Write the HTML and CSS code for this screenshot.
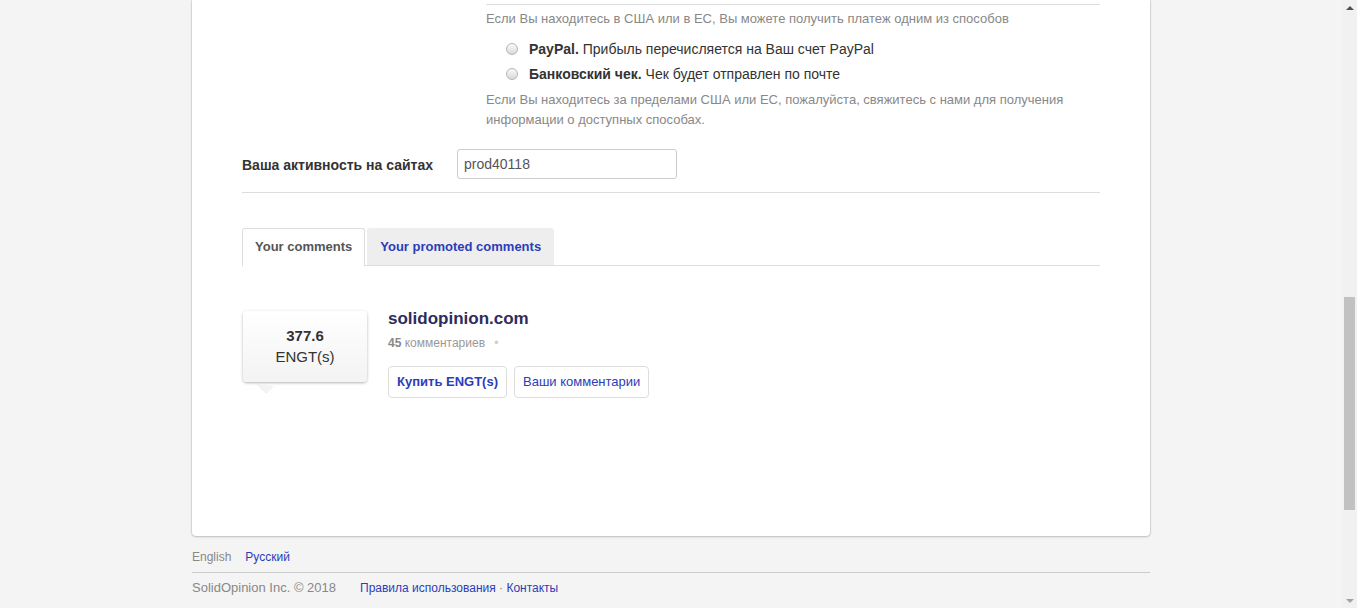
FILE: index.html
```html
<!DOCTYPE html>
<html lang="ru">
<head>
<meta charset="utf-8">
<title>SolidOpinion</title>
<link rel="stylesheet" href="styles.css">
</head>
<body>
<div class="screen">
  <div class="viewport">
    <div class="page">
      <div class="card">
        <div class="payout">
          <p class="note">Если Вы находитесь в США или в ЕС, Вы можете получить платеж одним из способов</p>
          <ul class="radios">
            <li><span class="radio"></span><b>PayPal.</b>&nbsp;Прибыль перечисляется на Ваш счет PayPal</li>
            <li><span class="radio"></span><b>Банковский чек.</b>&nbsp;Чек будет отправлен по почте</li>
          </ul>
          <p class="note">Если Вы находитесь за пределами США или ЕС, пожалуйста, свяжитесь с нами для получения информации о доступных способах.</p>
        </div>
        <div class="form-row">
          <label class="label">Ваша активность на сайтах</label>
          <div class="input">prod40118</div>
        </div>
        <div class="divider"></div>
        <ul class="tabs">
          <li class="tab active">Your comments</li>
          <li class="tab">Your promoted comments</li>
        </ul>
        <div class="comments">
          <div class="item">
            <div class="bubble">
              <div class="amount">377.6</div>
              <div class="unit">ENGT(s)</div>
            </div>
            <div class="info">
              <div class="site">solidopinion.com</div>
              <div class="meta"><b>45</b> комментариев <span class="dot">•</span></div>
              <div class="actions">
                <span class="btn strong">Купить ENGT(s)</span>
                <span class="btn">Ваши комментарии</span>
              </div>
            </div>
          </div>
        </div>
      </div>
      <div class="footer">
        <div class="langs"><span class="muted">English</span><span class="link">Русский</span></div>
        <div class="bottom"><span class="muted copy">SolidOpinion Inc. © 2018</span><span class="links"><span class="link">Правила использования</span> · <span class="link">Контакты</span></span></div>
      </div>
    </div>
  </div>
  <div class="scrollbar">
    <div class="arrow up"></div>
    <div class="track"><div class="thumb"></div></div>
    <div class="arrow down"></div>
  </div>
</div>
</body>
</html>
```

FILE: styles.css
```css
* { box-sizing: border-box; }
html, body { margin: 0; padding: 0; }
body {
  background: #f4f4f4;
  font-family: "Liberation Sans", Arial, sans-serif;
  color: #333;
  font-size: 14px;
}
.screen { display: flex; height: 608px; overflow: hidden; }
.viewport { flex: 1; height: 608px; overflow: hidden; }
.page { width: 958px; margin: 0 auto; }
.card {
  background: #fff;
  border-radius: 0 0 4px 4px;
  box-shadow: 0 1px 2px rgba(0,0,0,0.22), 1px 0 1px rgba(0,0,0,0.08), -1px 0 1px rgba(0,0,0,0.08);
  padding: 4px 50px 0 50px;
  height: 536px;
}
.payout { margin-left: 244px; border-top: 1px solid #ddd; }
.note { margin: 4px 0 0; font-size: 13px; line-height: 20px; color: #888; }
.radios { list-style: none; margin: 7px 0 0; padding: 0 0 0 20px; }
.radios li { display: flex; align-items: center; height: 25px; font-size: 14px; color: #333; }
.radios b { font-weight: bold; }
.radio {
  width: 12px; height: 12px; border-radius: 50%;
  border: 1px solid #b5b5b5;
  background: linear-gradient(#fafafa, #d9d9d9);
  margin-right: 11px;
}
.form-row { display: flex; align-items: center; margin-top: 19px; }
.label { width: 215px; font-weight: bold; font-size: 14px; color: #333; padding-top: 2px; }
.input {
  width: 220px; height: 30px;
  border: 1px solid #ccc; border-radius: 3px;
  padding: 0 6px; line-height: 28px; font-size: 14px; color: #555;
}
.divider { height: 1px; background: #ddd; margin-top: 13px; }
.tabs {
  list-style: none; margin: 35px 0 0; padding: 0;
  display: flex; gap: 2px; border-bottom: 1px solid #ddd;
}
.tab {
  padding: 8px 12px; line-height: 20px; font-size: 13px; font-weight: bold;
  color: #2c3db8; background: #eee; border: 1px solid #eee; border-bottom: 0;
  border-radius: 3px 3px 0 0;
}
.tab.active { background: #fff; border-color: #ddd; color: #555; margin-bottom: -1px; padding-bottom: 9px; }
.comments { padding-top: 45px; }
.item { display: flex; align-items: flex-start; }
.bubble {
  position: relative;
  margin-left: 1px;
  width: 124px; height: 71px;
  border-radius: 4px;
  background: linear-gradient(#fff, #f3f3f3);
  box-shadow: 0 1px 3px rgba(0,0,0,0.3);
  text-align: center; padding-top: 14px;
  font-size: 15px; line-height: 21px; color: #333;
}
.bubble::after {
  content: ""; position: absolute; left: 15px; bottom: -10px;
  width: 14px; height: 14px; background: #f3f3f3;
  transform: rotate(45deg) scaleY(0.75);
  box-shadow: 1px 1px 1px rgba(0,0,0,0.18);
  clip-path: polygon(100% 0, 100% 100%, 0 100%);
}
.amount { font-weight: bold; }
.info { margin-left: 21px; margin-top: -3px; }
.site { font-size: 17px; font-weight: bold; color: #2e2c5c; line-height: 22px; }
.meta { font-size: 12px; color: #999; margin-top: 6px; line-height: 14px; }
.meta b { color: #888; }
.dot { color: #ccc; margin-left: 6px; }
.actions { display: flex; gap: 7px; margin-top: 16px; }
.btn {
  height: 32px; line-height: 30px; padding: 0 8px;
  border: 1px solid #ddd; border-radius: 4px;
  font-size: 13px; color: #2c3db8; background: #fff;
}
.btn.strong { font-weight: bold; }
.footer { font-size: 12px; line-height: 16px; }
.langs { display: flex; gap: 14px; margin-top: 13px; }
.muted { color: #888; }
.copy { font-size: 13px; }
.link { color: #2c3db8; }
.bottom { display: flex; margin-top: 7px; border-top: 1px solid #ccc; padding-top: 7px; }
.links { margin-left: 24px; color: #888; }
.scrollbar {
  width: 15px; height: 608px; background: #f1f1f1;
  display: flex; flex-direction: column;
}
.arrow { height: 15px; display: flex; align-items: center; justify-content: center; }
.arrow.up::before {
  content: ""; border-left: 4px solid transparent; border-right: 4px solid transparent;
  border-bottom: 4px solid #505050;
}
.arrow.down::before {
  content: ""; border-left: 4px solid transparent; border-right: 4px solid transparent;
  border-top: 4px solid #a3a3a3;
}
.track { flex: 1; padding: 282px 2px 0; }
.thumb { height: 213px; background: #c1c1c1; }
```
